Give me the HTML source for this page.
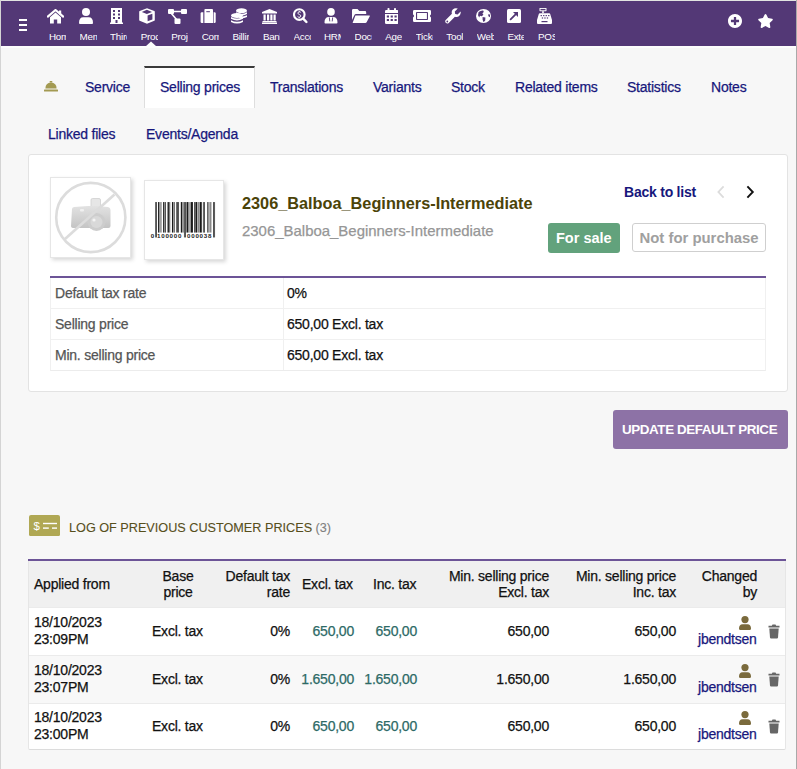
<!DOCTYPE html>
<html><head><meta charset="utf-8">
<style>
*{margin:0;padding:0;box-sizing:border-box}
html,body{width:797px;height:769px;overflow:hidden}
body{position:relative;background:#f7f7f7;font-family:"Liberation Sans",sans-serif;-webkit-text-stroke:0.25px currentColor;font-size:14px;color:#111}
.a{position:absolute;white-space:nowrap}
#lb{position:absolute;left:0;top:0;width:1px;height:769px;background:#d4d4d4}
#rb{position:absolute;left:796px;top:0;width:1px;height:769px;background:#a9a9a9}
#tb{position:absolute;left:0;top:0;width:797px;height:1px;background:#e2e5e2}
#top{position:absolute;left:1px;top:1px;width:795px;height:45px;background:#533876}
#wl{position:absolute;left:1px;top:46px;width:795px;height:2px;background:#fdfdfd}
.mi{position:absolute;top:0;width:30px;height:45px}
.ic{position:absolute;top:8px;left:50%;transform:translateX(-50%)}
.ml{position:absolute;top:31px;width:17px;overflow:hidden;color:#fff;font-size:9.8px;letter-spacing:-0.25px;white-space:nowrap;line-height:12px}
[style*="font-weight:bold"],.ml,svg text{-webkit-text-stroke:0}
.lnk{color:#17177c;font-size:14px;letter-spacing:-0.23px}
.fl{color:#555;font-size:14px;letter-spacing:-0.23px;line-height:16px}
.fv{color:#111;font-size:14px;letter-spacing:-0.23px;line-height:16px}
.th{color:#111;font-size:14px;letter-spacing:-0.23px;line-height:16px}
.td{color:#111;font-size:14px;letter-spacing:-0.23px;line-height:16.5px}
.tab{position:absolute;top:66px;height:42px;font-size:14px;letter-spacing:-0.23px;color:#17177c}
</style></head><body>
<div id="tb"></div><div id="lb"></div><div id="rb"></div>
<div id="top"></div><div id="wl"></div>

<!-- hamburger -->
<div class="a" style="left:19px;top:19px;width:8px;height:2px;background:#fff"></div>
<div class="a" style="left:19px;top:24px;width:8px;height:2px;background:#fff"></div>
<div class="a" style="left:19px;top:29px;width:8px;height:2px;background:#fff"></div>

<div id="menu"><svg class="a" style="left:47px;top:9px" width="17" height="15" viewBox="0 0 17 15"><path d="M0.8 7.6 L8.5 1 L16.2 7.6" stroke="#fff" stroke-width="2.2" fill="none" stroke-linejoin="round" stroke-linecap="round"/><rect x="12" y="1.5" width="2.2" height="4" fill="#fff"/><path d="M3 8.2 L8.5 3.6 L14 8.2 V14.5 H10.2 V10.5 H6.8 V14.5 H3 Z" fill="#fff"/></svg>
<div class="ml" style="left:49.0px">Home</div>
<svg class="a" style="left:79px;top:8px" width="14" height="16" viewBox="0 0 14 16"><circle cx="7" cy="4" r="4" fill="#fff"/><path d="M0 15 Q0 9.3 4.3 9.3 H9.7 Q14 9.3 14 15 Q14 16 13 16 H1 Q0 16 0 15Z" fill="#fff"/></svg>
<div class="ml" style="left:79.6px">Members</div>
<svg class="a" style="left:110px;top:8px" width="13" height="16" viewBox="0 0 13 16"><rect x="1" y="0" width="11" height="15" fill="#fff"/><rect x="0" y="14.5" width="13" height="1.5" fill="#fff"/><g fill="#533876"><rect x="3" y="2" width="2" height="2"/><rect x="8" y="2" width="2" height="2"/><rect x="3" y="5.5" width="2" height="2"/><rect x="8" y="5.5" width="2" height="2"/><rect x="3" y="9" width="2" height="2"/><rect x="8" y="9" width="2" height="2"/><rect x="5.5" y="12" width="2" height="3"/></g></svg>
<div class="ml" style="left:110.1px">Third</div>
<svg class="a" style="left:139px;top:8px" width="16" height="16" viewBox="0 0 16 16"><path d="M8 0.3 L15.3 3.1 Q15.8 3.3 15.8 3.9 V12 Q15.8 12.5 15.3 12.7 L8 15.7 L0.7 12.7 Q0.2 12.5 0.2 12 V3.9 Q0.2 3.3 0.7 3.1 Z" fill="#fff"/><path d="M7.9 1.8 L13 3.95 L7.9 6.1 L2.8 3.95 Z" fill="#533876"/><path d="M8.6 7.5 L13.4 5.8 V11.5 L8.6 13.3 Z" fill="#533876"/></svg>
<div class="ml" style="left:140.7px">Products</div>
<svg class="a" style="left:168px;top:9px" width="19" height="15" viewBox="0 0 19 15"><rect x="0" y="0" width="6" height="5" rx="1" fill="#fff"/><rect x="13" y="0" width="6" height="5" rx="1" fill="#fff"/><rect x="6.5" y="9.5" width="6" height="5.5" rx="1" fill="#fff"/><path d="M5 2.5 H13.5 M3 4 L8.5 10.5" stroke="#fff" stroke-width="1.6" fill="none"/></svg>
<div class="ml" style="left:171.2px">Projects</div>
<svg class="a" style="left:200px;top:9px" width="16" height="14" viewBox="0 0 16 14"><path d="M0.6 4.4 Q0.6 3.2 1.8 3.2 H3.3 V14 H1.8 Q0.6 14 0.6 12.8Z" fill="#fff"/><path d="M4.4 1 Q4.4 0 5.4 0 H12 Q13 0 13 1 V14 H4.4Z" fill="#fff"/><rect x="6.3" y="2.2" width="3.6" height="1" fill="#533876"/><path d="M13.6 3.2 H14.5 Q15.7 3.2 15.7 4.4 V12.8 Q15.7 14 14.5 14 H13.6Z" fill="#fff"/></svg>
<div class="ml" style="left:201.8px">Commerce</div>
<svg class="a" style="left:231px;top:8px" width="16" height="16" viewBox="0 0 16 16"><ellipse cx="10.5" cy="2.7" rx="5.5" ry="2.4" fill="#fff"/><path d="M5 4.2 Q10.5 7.2 16 4.2 V6 Q10.5 9 5 6 Z M7 7.6 Q10.5 9.6 16 7.2 V9 Q12 11 8.5 10.2 Z" fill="#fff"/><ellipse cx="6" cy="7.5" rx="6" ry="2.6" fill="#fff"/><path d="M0 9 Q6 12.2 12 9 V10.8 Q6 14 0 10.8 Z M0 12.2 Q6 15.4 12 12.2 V14 Q6 17.2 0 14 Z" fill="#fff"/></svg>
<div class="ml" style="left:232.4px">Billing</div>
<svg class="a" style="left:262px;top:9px" width="15" height="15" viewBox="0 0 15 15"><path d="M7.5 0 L15 3 V4.5 H0 V3 Z" fill="#fff"/><g fill="#fff"><rect x="1.5" y="5.5" width="2.2" height="6"/><rect x="5" y="5.5" width="2.2" height="6"/><rect x="8.3" y="5.5" width="2.2" height="6"/><rect x="11.5" y="5.5" width="2.2" height="6"/><rect x="0.5" y="12" width="14" height="1.2"/><rect x="0" y="13.5" width="15" height="1.5"/></g></svg>
<div class="ml" style="left:262.9px">Bank</div>
<svg class="a" style="left:292.5px;top:8px" width="15" height="16" viewBox="0 0 15 16"><circle cx="6.3" cy="6.6" r="5.3" stroke="#fff" stroke-width="2.1" fill="none"/><path d="M10.2 10.6 L13.4 14" stroke="#fff" stroke-width="2.4" stroke-linecap="round"/><path d="M7.9 4.6 Q7.5 3.9 6.3 3.9 Q4.9 3.9 4.9 5.1 Q4.9 6.1 6.3 6.5 Q7.8 6.9 7.8 8 Q7.8 9.2 6.3 9.2 Q5 9.2 4.6 8.5 M6.3 2.9 V3.9 M6.3 9.2 V10.2" stroke="#fff" stroke-width="0.9" fill="none"/></svg>
<div class="ml" style="left:293.5px">Accounting</div>
<svg class="a" style="left:323.5px;top:8px" width="14" height="16" viewBox="0 0 14 16"><circle cx="7" cy="3.9" r="3.8" fill="#fff"/><path d="M0.5 14.6 Q0.5 9.6 4.2 9.1 H9.8 Q13.5 9.6 13.5 14.6 Q13.5 15.5 12.6 15.5 H1.4 Q0.5 15.5 0.5 14.6Z" fill="#fff"/><path d="M5.3 9.4 L5.8 13.4 M8.7 9.4 L8.2 13.4" stroke="#533876" stroke-width="0.9" fill="none"/></svg>
<div class="ml" style="left:324.0px">HRM</div>
<svg class="a" style="left:352px;top:9px" width="18" height="14" viewBox="0 0 18 14"><path d="M0 1.2 Q0 0 1.2 0 H5.5 L7.3 2 H13 Q14.2 2 14.2 3.2 V5 H4 Q3 5 2.6 5.8 L0 11 Z" fill="#fff"/><path d="M3.4 6.4 H17.2 Q18.2 6.4 17.8 7.3 L14.6 13.2 Q14.2 14 13.3 14 H0.6 Z" fill="#fff"/></svg>
<div class="ml" style="left:354.6px">Documents</div>
<svg class="a" style="left:384.5px;top:8px" width="13.5" height="16" viewBox="0 0 13.5 16"><rect x="0" y="2" width="13.5" height="14" rx="1.3" fill="#fff"/><rect x="2.5" y="0" width="2" height="3" rx="0.8" fill="#fff"/><rect x="9" y="0" width="2" height="3" rx="0.8" fill="#fff"/><g fill="#533876"><rect x="0" y="5" width="13.5" height="1"/><rect x="1.8" y="7.5" width="2.2" height="2"/><rect x="5.65" y="7.5" width="2.2" height="2"/><rect x="9.5" y="7.5" width="2.2" height="2"/><rect x="1.8" y="11" width="2.2" height="2"/><rect x="5.65" y="11" width="2.2" height="2"/><rect x="9.5" y="11" width="2.2" height="2"/></g></svg>
<div class="ml" style="left:385.2px">Agenda</div>
<svg class="a" style="left:413px;top:10px" width="18" height="12" viewBox="0 0 18 12"><path d="M0 1.2 Q0 0 1.2 0 H16.8 Q18 0 18 1.2 V4.6 Q17 5 17 6 Q17 7 18 7.4 V10.8 Q18 12 16.8 12 H1.2 Q0 12 0 10.8 V7.4 Q1 7 1 6 Q1 5 0 4.6 Z" fill="#fff"/><rect x="3" y="1.9" width="12" height="8.2" rx="0.8" fill="#533876"/><rect x="4.1" y="3" width="9.8" height="6" fill="#fff"/></svg>
<div class="ml" style="left:415.7px">Tickets</div>
<svg class="a" style="left:445px;top:8px" width="16" height="16" viewBox="0 0 16 16"><path d="M15.6 3.4 L12.6 6.4 L10.2 6 L9.8 3.6 L12.8 0.6 Q9.8 -0.4 7.8 1.6 Q6.2 3.2 6.9 5.8 L0.7 12 Q-0.3 13.2 0.7 14.8 Q2.3 16.2 3.7 15 L9.9 8.8 Q12.5 9.6 14.2 8 Q16.2 6 15.6 3.4Z" fill="#fff"/><circle cx="2.3" cy="13.5" r="0.9" fill="#533876"/></svg>
<div class="ml" style="left:446.3px">Tools</div>
<svg class="a" style="left:475.5px;top:9px" width="15" height="14" viewBox="0 0 15 14"><ellipse cx="7.5" cy="7" rx="7.5" ry="7" fill="#fff"/><path d="M2.6 3 Q4.6 1.2 7.2 1.4 L7.8 3 L6.4 4.2 L7.4 5.8 L5.8 7.2 L4 6.8 L3.2 8.4 L2 6.2 Z M6.6 8 L9.4 8.6 L9.2 11.4 L7.6 13.2 L6.6 10.8 Z M12.2 5.2 L14 5.6 L14 8.2 L12.4 7.2 Z" fill="#533876"/></svg>
<div class="ml" style="left:476.8px">Website</div>
<svg class="a" style="left:507px;top:9px" width="14" height="14" viewBox="0 0 14 14"><rect x="0" y="0" width="14" height="14" rx="1.5" fill="#fff"/><path d="M3.6 10.4 L9.6 4.4" stroke="#533876" stroke-width="1.8" stroke-linecap="round"/><path d="M6 3 H11 V8 Z" fill="#533876"/></svg>
<div class="ml" style="left:507.4px">External</div>
<svg class="a" style="left:537px;top:8px" width="15" height="16" viewBox="0 0 15 16"><rect x="2.5" y="0" width="7" height="3.2" rx="0.6" fill="#fff"/><rect x="5.2" y="3.2" width="1.6" height="2" fill="#fff"/><path d="M2.8 5.2 H12.2 Q13 5.2 13.2 6 L15 12 V15 Q15 16 14 16 H1 Q0 16 0 15 V12 L1.8 6 Q2 5.2 2.8 5.2Z" fill="#fff"/><g fill="#533876"><rect x="3.5" y="0.9" width="5" height="1.4"/><rect x="3.6" y="7" width="1.3" height="1.2"/><rect x="6.1" y="7" width="1.3" height="1.2"/><rect x="8.6" y="7" width="1.3" height="1.2"/><rect x="11.1" y="7" width="1.3" height="1.2"/><rect x="4.8" y="9.4" width="1.3" height="1.2"/><rect x="7.3" y="9.4" width="1.3" height="1.2"/><rect x="9.8" y="9.4" width="1.3" height="1.2"/><rect x="4.5" y="13" width="6" height="1.2"/></g></svg>
<div class="ml" style="left:538.0px">POS</div></div><!--menu-->

<!-- active triangle -->
<svg class="a" style="left:145px;top:41px" width="12" height="6"><path d="M0 6 L6 0.5 L12 6 Z" fill="#fdfdfd"/></svg>

<!-- right icons -->
<svg class="a" style="left:728px;top:14px" width="14" height="14" viewBox="8 8 496 496"><path fill="#fff" d="M256 8C119 8 8 119 8 256s111 248 248 248 248-111 248-248S393 8 256 8zm144 276c0 6.6-5.4 12-12 12h-92v92c0 6.6-5.4 12-12 12h-56c-6.6 0-12-5.4-12-12v-92h-92c-6.6 0-12-5.4-12-12v-56c0-6.6 5.4-12 12-12h92v-92c0-6.6 5.4-12 12-12h56c6.6 0 12 5.4 12 12v92h92c6.6 0 12 5.4 12 12v56z"/></svg>
<svg class="a" style="left:758px;top:14px" width="15" height="14" viewBox="18 0 540 512"><path fill="#fff" d="M259.3 17.8L194 150.2 47.9 171.5c-26.2 3.8-36.7 36.1-17.7 54.6l105.7 103-25 145.5c-4.5 26.3 23.2 46 46.4 33.7L288 439.6l130.7 68.7c23.2 12.2 50.9-7.4 46.4-33.7l-25-145.5 105.7-103c19-18.5 8.5-50.8-17.7-54.6L382 150.2 316.7 17.8c-11.7-23.6-45.6-23.9-57.4 0z"/></svg>

<!-- tabs -->
<svg class="a" style="left:44px;top:81px" width="14" height="11" viewBox="0 0 14 11"><rect x="5.6" y="0" width="2.8" height="1.6" rx="0.6" fill="#a39a52"/><path d="M1.4 7.6 Q1.4 1.6 7 1.4 Q12.6 1.6 12.6 7.6 Z" fill="#a39a52"/><rect x="0" y="8.6" width="14" height="2" rx="0.5" fill="#a39a52"/></svg>
<div class="a lnk" style="left:85px;top:79px">Service</div>
<div class="a" style="left:144px;top:66px;width:111px;height:42px;background:#fff;border-left:1px solid #dedede;border-right:1px solid #dedede;border-top:2px solid #3a3a3a"></div>
<div class="a lnk" style="left:160px;top:79px">Selling prices</div>
<div class="a lnk" style="left:270px;top:79px">Translations</div>
<div class="a lnk" style="left:373px;top:79px">Variants</div>
<div class="a lnk" style="left:451px;top:79px">Stock</div>
<div class="a lnk" style="left:515px;top:79px">Related items</div>
<div class="a lnk" style="left:627px;top:79px">Statistics</div>
<div class="a lnk" style="left:711px;top:79px">Notes</div>
<div class="a lnk" style="left:48px;top:126px">Linked files</div>
<div class="a lnk" style="left:146px;top:126px">Events/Agenda</div>

<!-- main box -->
<div class="a" style="left:28px;top:154px;width:760px;height:238px;background:#fff;border:1px solid #e3e3e3;border-radius:3px"></div>


<!-- photo -->
<div class="a" style="left:50px;top:177px;width:81px;height:81px;background:#fff;border:1px solid #e6e6e6;box-shadow:2px 2px 4px rgba(0,0,0,0.16)"></div>
<svg class="a" style="left:50px;top:177px" width="81" height="81" viewBox="0 0 81 81">
<defs><linearGradient id="cg" x1="0" y1="0" x2="0" y2="1"><stop offset="0" stop-color="#e2e2e2"/><stop offset="1" stop-color="#c4c4c4"/></linearGradient></defs>
<rect x="41" y="21.5" width="9.5" height="9" rx="1.5" fill="#e6e6e6" stroke="#cfcfcf" stroke-width="0.8"/>
<path d="M22 32 Q22 30.5 24 30 L38 29 L46 29 L58 30 Q60.5 30.5 60.5 33 V49 Q60.5 51 58.5 51 H24 Q21 51 21 49 Z" fill="url(#cg)"/>
<circle cx="46.5" cy="45" r="9" fill="#cdcdcd"/><circle cx="46.5" cy="45" r="6" fill="#d9d9d9"/><circle cx="44" cy="43" r="1.6" fill="#f4f4f4"/>
<rect x="30" y="32" width="4" height="2.5" rx="1" fill="#f0f0f0"/>
<circle cx="40.8" cy="40.5" r="34.6" fill="none" stroke="#dcdcdc" stroke-width="2.6"/>
<path d="M64.5 17.5 L15 62" stroke="#dcdcdc" stroke-width="2.6"/>
</svg>
<!-- barcode -->
<div class="a" style="left:144px;top:180px;width:80px;height:80px;background:#fff;border:1px solid #e6e6e6;box-shadow:2px 2px 4px rgba(0,0,0,0.16)"></div>
<svg class="a" style="left:154.7px;top:202px" width="60.82" height="37" viewBox="0 0 61 37"><g fill="#1a1a1a"><rect x="-0.10" y="0" width="0.75" height="35.5"/><rect x="1.17" y="0" width="0.75" height="35.5"/><rect x="3.07" y="0" width="1.39" height="30.6"/><rect x="5.60" y="0" width="0.75" height="30.6"/><rect x="8.14" y="0" width="1.39" height="30.6"/><rect x="10.04" y="0" width="0.75" height="30.6"/><rect x="12.57" y="0" width="1.39" height="30.6"/><rect x="14.47" y="0" width="0.75" height="30.6"/><rect x="17.01" y="0" width="1.39" height="30.6"/><rect x="18.91" y="0" width="0.75" height="30.6"/><rect x="21.45" y="0" width="1.39" height="30.6"/><rect x="23.35" y="0" width="0.75" height="30.6"/><rect x="25.88" y="0" width="1.39" height="30.6"/><rect x="27.78" y="0" width="0.75" height="30.6"/><rect x="29.05" y="0" width="0.75" height="35.5"/><rect x="30.32" y="0" width="0.75" height="35.5"/><rect x="31.58" y="0" width="2.02" height="30.6"/><rect x="34.75" y="0" width="0.75" height="30.6"/><rect x="36.02" y="0" width="2.02" height="30.6"/><rect x="39.19" y="0" width="0.75" height="30.6"/><rect x="40.46" y="0" width="2.02" height="30.6"/><rect x="43.62" y="0" width="0.75" height="30.6"/><rect x="44.89" y="0" width="2.02" height="30.6"/><rect x="48.06" y="0" width="0.75" height="30.6"/><rect x="49.33" y="0" width="0.75" height="30.6"/><rect x="52.50" y="0" width="0.75" height="30.6"/><rect x="53.76" y="0" width="0.75" height="30.6"/><rect x="55.66" y="0" width="0.75" height="30.6"/><rect x="58.20" y="0" width="0.75" height="35.5"/><rect x="59.47" y="0" width="0.75" height="35.5"/></g></svg>
<svg class="a" style="left:150px;top:232px" width="68" height="8" viewBox="0 0 68 8"><g font-family="Liberation Sans" font-weight="bold" font-size="6.2" fill="#222"><text x="0.8" y="6.3">0</text><text x="7" y="6.3" letter-spacing="0.75">100000</text><text x="37" y="6.3" letter-spacing="0.75">000038</text></g></svg>

<!-- title -->
<div class="a" style="left:242px;top:193px;font-size:16.3px;line-height:20px;font-weight:bold;color:#4b4308">2306_Balboa_Beginners-Intermediate</div>
<div class="a" style="left:242px;top:222px;font-size:14.95px;line-height:18px;color:#969696">2306_Balboa_Beginners-Intermediate</div>

<div class="a" style="left:624px;top:184px;font-size:14px;letter-spacing:-0.23px;line-height:16px;font-weight:bold;color:#17177c">Back to list</div>
<svg class="a" style="left:716px;top:185px" width="10" height="14" viewBox="0 0 10 14"><path d="M7.6 1.4 L2.4 7 L7.6 12.6" stroke="#dcdcdc" stroke-width="1.8" fill="none"/></svg>
<svg class="a" style="left:745px;top:185px" width="10" height="14" viewBox="0 0 10 14"><path d="M2.4 1.4 L7.8 7 L2.4 12.6" stroke="#111" stroke-width="1.9" fill="none"/></svg>

<div class="a" style="left:548px;top:223px;width:72px;height:30px;background:#62a27c;border-radius:3px"></div>
<div class="a" style="left:556px;top:230px;font-size:14.5px;line-height:17px;font-weight:bold;color:#fff">For sale</div>
<div class="a" style="left:632px;top:223px;width:134px;height:29px;background:#fff;border:1px solid #cfcfcf;border-radius:3px"></div>
<div class="a" style="left:639.5px;top:230px;font-size:14.9px;line-height:17px;font-weight:bold;color:#a0a0a0">Not for purchase</div>

<!-- fields table -->
<div class="a" style="left:50px;top:276px;width:716px;height:2px;background:#6c5497"></div>
<div class="a" style="left:50px;top:278px;width:716px;height:93px;border-left:1px solid #f0f0f0;border-right:1px solid #f0f0f0;border-bottom:1px solid #ececec"></div>
<div class="a" style="left:51px;top:308px;width:714px;height:1px;background:#f0f0f0"></div>
<div class="a" style="left:51px;top:339px;width:714px;height:1px;background:#f0f0f0"></div>
<div class="a" style="left:283px;top:278px;width:1px;height:92px;background:#f0f0f0"></div>
<div class="a fl" style="left:55px;top:285px">Default tax rate</div>
<div class="a fv" style="left:287px;top:285px">0%</div>
<div class="a fl" style="left:55px;top:316px">Selling price</div>
<div class="a fv" style="left:287px;top:316px">650,00 Excl. tax</div>
<div class="a fl" style="left:55px;top:347px">Min. selling price</div>
<div class="a fv" style="left:287px;top:347px">650,00 Excl. tax</div>

<!-- button -->
<div class="a" style="left:613px;top:410px;width:175px;height:39px;background:#8d72a6;border-radius:3px"></div>
<div class="a" style="left:622px;top:422px;font-size:13.4px;letter-spacing:-0.4px;line-height:16px;font-weight:bold;color:#fff">UPDATE DEFAULT PRICE</div>


<!-- log title -->
<svg class="a" style="left:29px;top:515px" width="31" height="21" viewBox="0 0 31 21"><rect x="0" y="0" width="31" height="21.3" rx="2" fill="#b0a854"/><text x="4.6" y="14.6" font-family="Liberation Sans" font-size="11.5" fill="#fff">$</text><rect x="14" y="7.8" width="14" height="1.4" fill="#fff"/><rect x="14" y="12.4" width="5.8" height="1.4" fill="#fff"/><rect x="23" y="12.4" width="5" height="1.4" fill="#fff"/></svg>
<div class="a" style="left:69px;top:520px;font-size:12.66px;line-height:16px;color:#574f1c;-webkit-text-stroke:0.1px currentColor">LOG OF PREVIOUS CUSTOMER PRICES <span style="color:#808080">(3)</span></div>

<!-- log table -->
<div class="a" style="left:28px;top:559px;width:758px;height:2px;background:#6c5497"></div>
<div class="a" style="left:28px;top:561px;width:758px;height:46px;background:#f0f0f0"></div>
<div class="a" style="left:28px;top:607px;width:758px;height:48px;background:#fff;border-top:1px solid #ebebeb"></div>
<div class="a td" style="left:34px;top:614px">18/10/2023<br>23:09PM</div>
<div class="a td" style="left:152px;top:623px">Excl. tax</div>
<div class="a td" style="left:240px;top:623px;width:50px;text-align:right">0%</div>
<div class="a td" style="left:290px;top:623px;width:64px;text-align:right;color:#2d6a66">650,00</div>
<div class="a td" style="left:350px;top:623px;width:67px;text-align:right;color:#2d6a66">650,00</div>
<div class="a td" style="left:440px;top:623px;width:109px;text-align:right">650,00</div>
<div class="a td" style="left:560px;top:623px;width:116px;text-align:right">650,00</div>
<svg class="a" style="left:739px;top:616px" width="12" height="14" viewBox="0 0 12 14"><circle cx="6" cy="3.6" r="3.6" fill="#7a6a3c"/><path d="M0 12.8 Q0 8.2 3.6 8.2 H8.4 Q12 8.2 12 12.8 Q12 13.9 11 13.9 H1 Q0 13.9 0 12.8Z" fill="#7a6a3c"/></svg>
<div class="a td" style="left:698px;top:631px;color:#17177c">jbendtsen</div>
<svg class="a" style="left:768px;top:624px" width="12" height="15" viewBox="0 0 12 15"><path d="M0.5 1.8 H3.8 L4.5 0.5 H7.5 L8.2 1.8 H11.5 V3.6 H0.5Z" fill="#666"/><path d="M1.3 4.4 H10.7 L10 13.5 Q9.9 14.5 8.9 14.5 H3.1 Q2.1 14.5 2 13.5Z" fill="#666"/></svg>
<div class="a" style="left:28px;top:655px;width:758px;height:48px;background:#f8f8f8;border-top:1px solid #ebebeb"></div>
<div class="a td" style="left:34px;top:662px">18/10/2023<br>23:07PM</div>
<div class="a td" style="left:152px;top:671px">Excl. tax</div>
<div class="a td" style="left:240px;top:671px;width:50px;text-align:right">0%</div>
<div class="a td" style="left:290px;top:671px;width:64px;text-align:right;color:#2d6a66">1.650,00</div>
<div class="a td" style="left:350px;top:671px;width:67px;text-align:right;color:#2d6a66">1.650,00</div>
<div class="a td" style="left:440px;top:671px;width:109px;text-align:right">1.650,00</div>
<div class="a td" style="left:560px;top:671px;width:116px;text-align:right">1.650,00</div>
<svg class="a" style="left:739px;top:664px" width="12" height="14" viewBox="0 0 12 14"><circle cx="6" cy="3.6" r="3.6" fill="#7a6a3c"/><path d="M0 12.8 Q0 8.2 3.6 8.2 H8.4 Q12 8.2 12 12.8 Q12 13.9 11 13.9 H1 Q0 13.9 0 12.8Z" fill="#7a6a3c"/></svg>
<div class="a td" style="left:698px;top:679px;color:#17177c">jbendtsen</div>
<svg class="a" style="left:768px;top:672px" width="12" height="15" viewBox="0 0 12 15"><path d="M0.5 1.8 H3.8 L4.5 0.5 H7.5 L8.2 1.8 H11.5 V3.6 H0.5Z" fill="#666"/><path d="M1.3 4.4 H10.7 L10 13.5 Q9.9 14.5 8.9 14.5 H3.1 Q2.1 14.5 2 13.5Z" fill="#666"/></svg>
<div class="a" style="left:28px;top:703px;width:758px;height:46px;background:#fff;border-top:1px solid #ebebeb"></div>
<div class="a td" style="left:34px;top:709px">18/10/2023<br>23:00PM</div>
<div class="a td" style="left:152px;top:718px">Excl. tax</div>
<div class="a td" style="left:240px;top:718px;width:50px;text-align:right">0%</div>
<div class="a td" style="left:290px;top:718px;width:64px;text-align:right;color:#2d6a66">650,00</div>
<div class="a td" style="left:350px;top:718px;width:67px;text-align:right;color:#2d6a66">650,00</div>
<div class="a td" style="left:440px;top:718px;width:109px;text-align:right">650,00</div>
<div class="a td" style="left:560px;top:718px;width:116px;text-align:right">650,00</div>
<svg class="a" style="left:739px;top:711px" width="12" height="14" viewBox="0 0 12 14"><circle cx="6" cy="3.6" r="3.6" fill="#7a6a3c"/><path d="M0 12.8 Q0 8.2 3.6 8.2 H8.4 Q12 8.2 12 12.8 Q12 13.9 11 13.9 H1 Q0 13.9 0 12.8Z" fill="#7a6a3c"/></svg>
<div class="a td" style="left:698px;top:726px;color:#17177c">jbendtsen</div>
<svg class="a" style="left:768px;top:719px" width="12" height="15" viewBox="0 0 12 15"><path d="M0.5 1.8 H3.8 L4.5 0.5 H7.5 L8.2 1.8 H11.5 V3.6 H0.5Z" fill="#666"/><path d="M1.3 4.4 H10.7 L10 13.5 Q9.9 14.5 8.9 14.5 H3.1 Q2.1 14.5 2 13.5Z" fill="#666"/></svg>
<div class="a" style="left:28px;top:561px;width:758px;height:189px;border-left:1px solid #e6e6e6;border-right:1px solid #e6e6e6;border-bottom:1px solid #dcdcdc;border-radius:0 0 2px 2px"></div>
<div class="a th" style="left:34px;top:576px">Applied from</div>
<div class="a th" style="left:150px;top:568px;width:56px;text-align:center">Base<br>price</div>
<div class="a th" style="left:200px;top:568px;width:90px;text-align:right">Default tax<br>rate</div>
<div class="a th" style="left:302px;top:576px">Excl. tax</div>
<div class="a th" style="left:373px;top:576px">Inc. tax</div>
<div class="a th" style="left:420px;top:568px;width:129px;text-align:right">Min. selling price<br>Excl. tax</div>
<div class="a th" style="left:560px;top:568px;width:116px;text-align:right">Min. selling price<br>Inc. tax</div>
<div class="a th" style="left:690px;top:568px;width:67px;text-align:right">Changed<br>by</div>
</body></html>
